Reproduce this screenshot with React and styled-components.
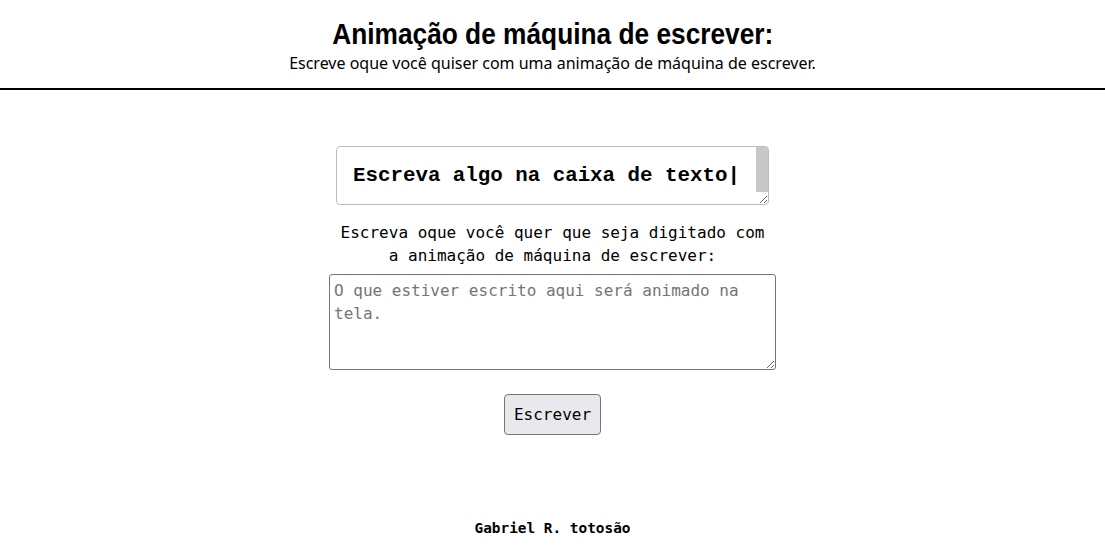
import styled, { createGlobalStyle } from "styled-components"

const GlobalStyle = createGlobalStyle`
  body {
    margin: 0;
    background: #ffffff;
    color: #000000;
    font-family: "DejaVu Sans Mono", monospace;
  }
`

const Header = styled.header`
  display: flex;
  flex-direction: column;
  align-items: center;
  padding: 16px 0 14px;
  border-bottom: 2px solid #000;
`

// sem fonte narrow instalada: comprime a Liberation Sans
const Title = styled.h1`
  margin: 0;
  font-family: "Liberation Sans Narrow", "Liberation Sans", sans-serif;
  font-weight: 700;
  font-size: 30px;
  line-height: 36px;
  transform: scaleX(0.876);
  transform-origin: center;
`

const Subtitle = styled.p`
  margin: 0;
  font-family: "Noto Sans", sans-serif;
  font-size: 16px;
  line-height: 22px;
`

const Main = styled.main`
  display: flex;
  flex-direction: column;
  align-items: center;
  padding-top: 56px;
`

const DisplayWrap = styled.div`
  position: relative;
  width: 433px;
  height: 59px;
`

const Display = styled.textarea`
  box-sizing: border-box;
  width: 100%;
  height: 100%;
  padding: 14px 16px;
  border: 1px solid #bdbdbd;
  border-radius: 4px;
  font-family: "Liberation Mono", monospace;
  font-weight: 700;
  font-size: 20.8px;
  line-height: 30px;
  color: #000;
  overflow: hidden;
  resize: both;
  outline: none;
`

const ScrollThumb = styled.div`
  position: absolute;
  top: 1px;
  right: 1px;
  width: 12px;
  height: 45px;
  background: #c8c8c8;
  pointer-events: none;
`

const Label = styled.label`
  width: 440px;
  margin-top: 16px;
  text-align: center;
  font-size: 16px;
  line-height: 23px;
`

const Input = styled.textarea`
  box-sizing: border-box;
  width: 447px;
  height: 96px;
  margin-top: 7px;
  padding: 4px;
  border: 1px solid #767676;
  border-radius: 3px;
  font-family: "DejaVu Sans Mono", monospace;
  font-size: 16px;
  line-height: 23px;

  &::placeholder {
    color: #757575;
  }
`

const Button = styled.button`
  margin-top: 24px;
  height: 41px;
  padding: 0 9px;
  background: #e9e9ed;
  border: 1px solid #767676;
  border-radius: 4px;
  font-family: "DejaVu Sans Mono", monospace;
  font-size: 16px;
  color: #000;
`

const Footer = styled.footer`
  margin-top: 85px;
  text-align: center;
  font-weight: 700;
  font-size: 14.4px;
  line-height: 17px;
`

export default function App() {
  return (
    <>
      <GlobalStyle />
      <Header>
        <Title>Animação de máquina de escrever:</Title>
        <Subtitle>Escreve oque você quiser com uma animação de máquina de escrever.</Subtitle>
      </Header>
      <Main>
        <DisplayWrap>
          <Display readOnly value="Escreva algo na caixa de texto|" />
          <ScrollThumb />
        </DisplayWrap>
        <Label htmlFor="texto">
          Escreva oque você quer que seja digitado com a animação de máquina de escrever:
        </Label>
        <Input id="texto" placeholder="O que estiver escrito aqui será animado na tela." />
        <Button>Escrever</Button>
        <Footer>Gabriel R. totosão</Footer>
      </Main>
    </>
  )
}
